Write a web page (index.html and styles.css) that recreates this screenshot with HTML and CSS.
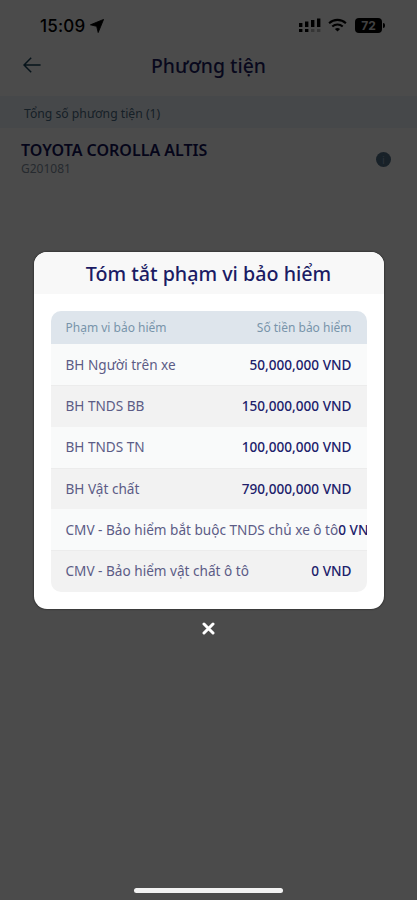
FILE: index.html
```
<!DOCTYPE html>
<html lang="vi">
<head>
    <meta charset="UTF-8">
    <meta name="viewport" content="width=device-width, initial-scale=1.0">
    <title>Phương tiện</title>
    <link rel="stylesheet" href="styles.css">
</head>
<body>
    <div class="screen">
        <div class="status-bar">
            <div class="clock">
                <span class="time">15:09</span>
                <svg class="location" width="14" height="14" viewBox="0 0 13 13"><path d="M12.6 .4 7.6 12.6 6.2 6.8.4 5.4z" fill="#000" stroke="#000" stroke-width=".8" stroke-linejoin="round"/></svg>
            </div>
            <div class="indicators">
                <svg width="22" height="15" viewBox="0 0 22 15">
                    <path d="M0 5h3.4v4H0zM6 3.6h3.4V9H6zM12 2h3.4v7H12zM18 .4h3.4V9H18zM0 11h3.4v3H0zM6 11h3.4v3H6z" fill="#000"/>
                    <path d="M12 11h3.4v3H12zM18 11h3.4v3H18z" fill="#b4b4b4"/>
                </svg>
                <svg width="19" height="14" viewBox="0 0 19 14">
                    <path d="M1.1 5.2a12.2 12.2 0 0 1 16.8 0M4.3 8.5a7.6 7.6 0 0 1 10.4 0" fill="none" stroke="#000" stroke-width="2.1"/>
                    <path d="M6.9 11a4 4 0 0 1 5.2 0L9.5 13.6z" fill="#000"/>
                </svg>
                <div class="battery">72</div>
            </div>
        </div>

        <div class="nav">
            <svg class="back" width="18" height="16" viewBox="0 0 18 16"><path d="M17.6 8H1M8.2 .8 1 8l7.2 7.2" fill="none" stroke="#164158" stroke-width="1.5"/></svg>
            <h1>Phương tiện</h1>
        </div>

        <div class="section-label">Tổng số phương tiện (1)</div>

        <div class="vehicle">
            <div>
                <div class="vehicle-name">TOYOTA COROLLA ALTIS</div>
                <div class="vehicle-plate">G201081</div>
            </div>
            <div class="info">i</div>
        </div>
    </div>

    <div class="overlay">
        <div class="modal">
            <h2 class="modal-title">Tóm tắt phạm vi bảo hiểm</h2>
            <div class="table">
                <div class="row table-head">
                    <span>Phạm vi bảo hiểm</span>
                    <span>Số tiền bảo hiểm</span>
                </div>
                <div class="row">
                    <span class="label">BH Người trên xe</span>
                    <span class="amount">50,000,000 VND</span>
                </div>
                <div class="row">
                    <span class="label">BH TNDS BB</span>
                    <span class="amount">150,000,000 VND</span>
                </div>
                <div class="row">
                    <span class="label">BH TNDS TN</span>
                    <span class="amount">100,000,000 VND</span>
                </div>
                <div class="row">
                    <span class="label">BH Vật chất</span>
                    <span class="amount">790,000,000 VND</span>
                </div>
                <div class="row">
                    <span class="label">CMV - Bảo hiểm bắt buộc TNDS chủ xe ô tô</span>
                    <span class="amount">0 VND</span>
                </div>
                <div class="row">
                    <span class="label">CMV - Bảo hiểm vật chất ô tô</span>
                    <span class="amount">0 VND</span>
                </div>
            </div>
        </div>
        <svg class="close" width="13" height="13" viewBox="0 0 13 13"><path d="M2 2l9 9M11 2l-9 9" stroke="#fff" stroke-width="3" stroke-linecap="round"/></svg>
        <div class="home-indicator"></div>
    </div>
</body>
</html>
```

FILE: styles.css
```
* {
    margin: 0;
    padding: 0;
    box-sizing: border-box;
}

body {
    background-color: #fff;
    font-family: "Noto Sans", "Open Sans", sans-serif;
    height: 900px;
    overflow: hidden;
}

.status-bar {
    display: flex;
    justify-content: space-between;
    align-items: center;
    height: 50px;
    padding: 0 31px 0 40px;
}

.clock {
    display: flex;
    align-items: center;
    gap: 5px;
    padding-top: 2px;
}

.time {
    font-family: Inter, "Liberation Sans", sans-serif;
    font-size: 17px;
    font-weight: 500;
    letter-spacing: 0.2px;
}

.indicators {
    display: flex;
    align-items: center;
    gap: 7px;
}

.battery {
    position: relative;
    width: 27px;
    height: 15px;
    margin: 0 4px 0 1px;
    border-radius: 4px;
    background: #000;
    color: #ddd;
    font: bold 12px/15px Inter, sans-serif;
    text-align: center;
}

.battery::after {
    content: "";
    position: absolute;
    left: 28px;
    top: 5px;
    width: 2px;
    height: 5px;
    border-radius: 0 2px 2px 0;
    background: #000;
}

.nav {
    display: grid;
    grid-template-columns: 18px 1fr 18px;
    align-items: center;
    height: 30px;
    padding: 0 23px;
}

.nav h1 {
    color: #1e1e64;
    font-size: 19.4px;
    font-weight: 500;
    text-align: center;
}

.section-label {
    height: 32px;
    margin-top: 16px;
    padding-left: 24px;
    background: #eff5fc;
    color: #4c6c85;
    font-size: 12.2px;
    line-height: 36px;
}

.vehicle {
    display: flex;
    justify-content: space-between;
    align-items: center;
    padding: 11px 26px 0 21px;
}

.vehicle-name {
    color: #14145a;
    font-size: 16px;
    font-weight: 600;
    line-height: 22px;
}

.vehicle-plate {
    color: #8190a0;
    font-size: 12px;
    line-height: 16px;
}

.info {
    width: 15px;
    height: 15px;
    margin-top: 2px;
    border-radius: 50%;
    background: #537088;
    color: #8fa9bd;
    font-size: 11px;
    line-height: 15px;
    text-align: center;
}

.overlay {
    position: absolute;
    inset: 0;
    display: flex;
    flex-direction: column;
    align-items: center;
    padding: 252px 0 7px;
    background: rgba(0, 0, 0, 0.704);
}

.modal {
    width: 350px;
    height: 357px;
    border-radius: 13px;
    background: #fff;
    box-shadow: 0 0 2px #111;
    overflow: hidden;
}

.modal-title {
    height: 42px;
    background: #f8f8f8;
    color: #1b1b64;
    font-size: 19.7px;
    font-weight: 500;
    line-height: 44px;
    text-align: center;
}

.table {
    margin: 17px 17px 0;
    border-radius: 10px;
    overflow: hidden;
}

.row {
    display: flex;
    justify-content: space-between;
    align-items: center;
    height: 41.3px;
    padding: 0 15px 1px;
    background: #f9fafa;
    white-space: nowrap;
}

.row:nth-child(odd) {
    background: #f2f2f2;
    border-top: 1px solid #ececec;
    padding-bottom: 2px;
}

.row.table-head {
    height: 33px;
    padding-bottom: 0;
    background: #dee5ec;
    border: none;
    color: #7894aa;
    font-size: 12px;
}

.label {
    flex-shrink: 0;
    color: #5c5c86;
    font-size: 13.6px;
}

.amount {
    color: #20206a;
    font-size: 13.6px;
    font-weight: 500;
}

.close {
    margin-top: 13px;
}

.home-indicator {
    width: 149px;
    height: 5px;
    margin-top: auto;
    border-radius: 3px;
    background: #f2f2f2;
}
```
